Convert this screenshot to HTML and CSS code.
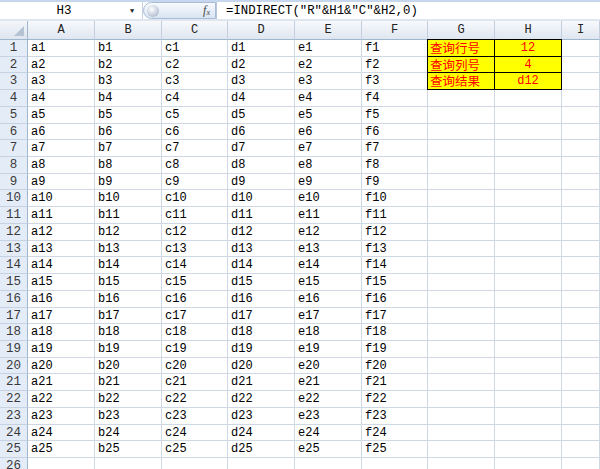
FILE: index.html
```html
<!DOCTYPE html>
<html>
<head>
<meta charset="utf-8">
<link rel="stylesheet" href="styles.css">
</head>
<body>
<div class="app">
  <div class="fbar">
    <div class="namebox"><span class="name">H3</span><span class="arrow">&#9660;</span></div>
    <div class="pill"><span class="knob"></span><span class="fx">f<sub>x</sub></span></div>
    <div class="formula">=INDIRECT("R"&amp;H1&amp;"C"&amp;H2,0)</div>
  </div>
  <div class="sheet">
    <div class="corner"><span class="tri"></span></div>
    <div class="ch">A</div><div class="ch">B</div><div class="ch">C</div><div class="ch">D</div><div class="ch">E</div><div class="ch">F</div><div class="ch">G</div><div class="ch">H</div><div class="ch">I</div>

    <div class="rh">1</div><div class="c">a1</div><div class="c">b1</div><div class="c">c1</div><div class="c">d1</div><div class="c">e1</div><div class="c">f1</div><div class="c hl l t cjk">查询行号</div><div class="c hl t ctr">12</div><div class="c"></div>
    <div class="rh">2</div><div class="c">a2</div><div class="c">b2</div><div class="c">c2</div><div class="c">d2</div><div class="c">e2</div><div class="c">f2</div><div class="c hl l cjk">查询列号</div><div class="c hl ctr">4</div><div class="c"></div>
    <div class="rh">3</div><div class="c">a3</div><div class="c">b3</div><div class="c">c3</div><div class="c">d3</div><div class="c">e3</div><div class="c">f3</div><div class="c hl l cjk">查询结果</div><div class="c hl ctr">d12</div><div class="c"></div>
    <div class="rh">4</div><div class="c">a4</div><div class="c">b4</div><div class="c">c4</div><div class="c">d4</div><div class="c">e4</div><div class="c">f4</div><div class="c"></div><div class="c"></div><div class="c"></div>
    <div class="rh">5</div><div class="c">a5</div><div class="c">b5</div><div class="c">c5</div><div class="c">d5</div><div class="c">e5</div><div class="c">f5</div><div class="c"></div><div class="c"></div><div class="c"></div>
    <div class="rh">6</div><div class="c">a6</div><div class="c">b6</div><div class="c">c6</div><div class="c">d6</div><div class="c">e6</div><div class="c">f6</div><div class="c"></div><div class="c"></div><div class="c"></div>
    <div class="rh">7</div><div class="c">a7</div><div class="c">b7</div><div class="c">c7</div><div class="c">d7</div><div class="c">e7</div><div class="c">f7</div><div class="c"></div><div class="c"></div><div class="c"></div>
    <div class="rh">8</div><div class="c">a8</div><div class="c">b8</div><div class="c">c8</div><div class="c">d8</div><div class="c">e8</div><div class="c">f8</div><div class="c"></div><div class="c"></div><div class="c"></div>
    <div class="rh">9</div><div class="c">a9</div><div class="c">b9</div><div class="c">c9</div><div class="c">d9</div><div class="c">e9</div><div class="c">f9</div><div class="c"></div><div class="c"></div><div class="c"></div>
    <div class="rh">10</div><div class="c">a10</div><div class="c">b10</div><div class="c">c10</div><div class="c">d10</div><div class="c">e10</div><div class="c">f10</div><div class="c"></div><div class="c"></div><div class="c"></div>
    <div class="rh">11</div><div class="c">a11</div><div class="c">b11</div><div class="c">c11</div><div class="c">d11</div><div class="c">e11</div><div class="c">f11</div><div class="c"></div><div class="c"></div><div class="c"></div>
    <div class="rh">12</div><div class="c">a12</div><div class="c">b12</div><div class="c">c12</div><div class="c">d12</div><div class="c">e12</div><div class="c">f12</div><div class="c"></div><div class="c"></div><div class="c"></div>
    <div class="rh">13</div><div class="c">a13</div><div class="c">b13</div><div class="c">c13</div><div class="c">d13</div><div class="c">e13</div><div class="c">f13</div><div class="c"></div><div class="c"></div><div class="c"></div>
    <div class="rh">14</div><div class="c">a14</div><div class="c">b14</div><div class="c">c14</div><div class="c">d14</div><div class="c">e14</div><div class="c">f14</div><div class="c"></div><div class="c"></div><div class="c"></div>
    <div class="rh">15</div><div class="c">a15</div><div class="c">b15</div><div class="c">c15</div><div class="c">d15</div><div class="c">e15</div><div class="c">f15</div><div class="c"></div><div class="c"></div><div class="c"></div>
    <div class="rh">16</div><div class="c">a16</div><div class="c">b16</div><div class="c">c16</div><div class="c">d16</div><div class="c">e16</div><div class="c">f16</div><div class="c"></div><div class="c"></div><div class="c"></div>
    <div class="rh">17</div><div class="c">a17</div><div class="c">b17</div><div class="c">c17</div><div class="c">d17</div><div class="c">e17</div><div class="c">f17</div><div class="c"></div><div class="c"></div><div class="c"></div>
    <div class="rh">18</div><div class="c">a18</div><div class="c">b18</div><div class="c">c18</div><div class="c">d18</div><div class="c">e18</div><div class="c">f18</div><div class="c"></div><div class="c"></div><div class="c"></div>
    <div class="rh">19</div><div class="c">a19</div><div class="c">b19</div><div class="c">c19</div><div class="c">d19</div><div class="c">e19</div><div class="c">f19</div><div class="c"></div><div class="c"></div><div class="c"></div>
    <div class="rh">20</div><div class="c">a20</div><div class="c">b20</div><div class="c">c20</div><div class="c">d20</div><div class="c">e20</div><div class="c">f20</div><div class="c"></div><div class="c"></div><div class="c"></div>
    <div class="rh">21</div><div class="c">a21</div><div class="c">b21</div><div class="c">c21</div><div class="c">d21</div><div class="c">e21</div><div class="c">f21</div><div class="c"></div><div class="c"></div><div class="c"></div>
    <div class="rh">22</div><div class="c">a22</div><div class="c">b22</div><div class="c">c22</div><div class="c">d22</div><div class="c">e22</div><div class="c">f22</div><div class="c"></div><div class="c"></div><div class="c"></div>
    <div class="rh">23</div><div class="c">a23</div><div class="c">b23</div><div class="c">c23</div><div class="c">d23</div><div class="c">e23</div><div class="c">f23</div><div class="c"></div><div class="c"></div><div class="c"></div>
    <div class="rh">24</div><div class="c">a24</div><div class="c">b24</div><div class="c">c24</div><div class="c">d24</div><div class="c">e24</div><div class="c">f24</div><div class="c"></div><div class="c"></div><div class="c"></div>
    <div class="rh">25</div><div class="c">a25</div><div class="c">b25</div><div class="c">c25</div><div class="c">d25</div><div class="c">e25</div><div class="c">f25</div><div class="c"></div><div class="c"></div><div class="c"></div>
    <div class="rh">26</div><div class="c"></div><div class="c"></div><div class="c"></div><div class="c"></div><div class="c"></div><div class="c"></div><div class="c"></div><div class="c"></div><div class="c"></div>
  </div>
</div>
</body>
</html>
```
FILE: styles.css
```css
* { box-sizing: border-box; }
html, body { margin: 0; padding: 0; background: #fff; }
body { width: 600px; height: 469px; overflow: hidden; font-family: "Liberation Mono", "Noto Sans CJK SC", monospace; font-size: 12px; color: #000; }
.app { display: flex; flex-direction: column; width: 600px; height: 469px; overflow: hidden; }

.fbar { display: flex; height: 21px; flex: none; background: #fff; border-top: 2px solid #c6d6ec; border-bottom: 2px solid #dfe6f0; }
.namebox { width: 143px; display: flex; align-items: center; border-right: 1px solid #c5d2e3; }
.name { width: 128px; text-align: center; font-size: 12.5px; }
.arrow { font-size: 7px; color: #222; margin-left: 2px; }
.pill { width: 73px; display: flex; align-items: center; justify-content: space-between; padding: 0 5px 0 3px; background: linear-gradient(#f7fafd, #d9e4f2); border: 1px solid #a9bcd6; border-radius: 9px 0 0 9px; }
.knob { width: 12px; height: 12px; border-radius: 50%; background: radial-gradient(circle at 40% 35%, #ffffff, #b8c4d4 70%, #8e9cb0); }
.fx { font-family: "Liberation Serif", serif; font-style: italic; font-size: 12px; color: #444; }
.fx sub { font-size: 8px; vertical-align: -1px; }
.formula { flex: 1; display: flex; align-items: center; padding-left: 9px; font-size: 12.3px; white-space: nowrap; border-left: 1px solid #b8c8dc; }

.sheet { display: grid; grid-template-columns: 28px 67px 67px 66px 67px 67px 66px 67px 67px 38px; grid-template-rows: 19px repeat(26, 16.72px); }
.corner { background: linear-gradient(#f3f6fa, #dde5ef); border-right: 1px solid #9eb6ce; border-bottom: 1px solid #9eb6ce; position: relative; }
.tri { position: absolute; right: 3px; bottom: 3px; width: 0; height: 0; border-left: 10px solid transparent; border-bottom: 10px solid #b4c2d4; }
.ch { background: linear-gradient(#f7f9fc, #dfe6f0); border-right: 1px solid #c3cfdf; border-bottom: 1px solid #9eb6ce; text-align: center; line-height: 18px; color: #222; font-size: 12px; }
.rh { background: #e4ecf7; border-right: 1px solid #9eb6ce; border-bottom: 1px solid #c6d2e2; text-align: center; line-height: 17px; color: #3a3a3a; font-size: 12.5px; }
.c { border-right: 1px solid #d0d7e5; border-bottom: 1px solid #d0d7e5; padding-left: 3px; line-height: 17px; white-space: nowrap; overflow: hidden; }

.hl { background: #ffff00; color: #ff0000; border-right-color: #000; border-bottom-color: #000; overflow: visible; }
.hl.l { box-shadow: -1px 0 0 #000; }
.hl.t { box-shadow: 0 -1px 0 #000; }
.hl.l.t { box-shadow: -1px 0 0 #000, 0 -1px 0 #000, -1px -1px 0 #000; }
.ctr { text-align: center; padding-left: 0; }
.cjk { font-family: "Noto Sans CJK SC", sans-serif; font-size: 12.5px; line-height: 15px; padding-left: 2px; }
```
